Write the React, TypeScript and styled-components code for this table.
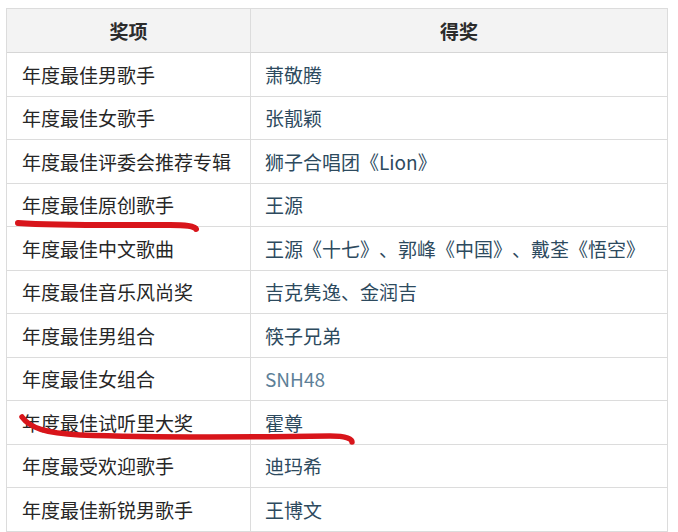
import styled, { createGlobalStyle } from "styled-components";

const GlobalStyle = createGlobalStyle`
  html, body {
    margin: 0;
    padding: 0;
    background: #ffffff;
  }
  body {
    font-family: "Noto Sans CJK SC", "Noto Sans", sans-serif;
    text-spacing-trim: space-all;
  }
`;

const Page = styled.div`
  position: relative;
  width: 678px;
  height: 532px;
  overflow: hidden;
  padding: 8px 0 0 6px;
  box-sizing: border-box;
`;

const Table = styled.div`
  width: 661px;
  display: grid;
  grid-template-columns: 244px 1fr;
  border-top: 1px solid #dcdcdc;
  border-left: 1px solid #dcdcdc;
`;

const HeadCell = styled.div`
  height: 44px;
  display: flex;
  align-items: center;
  justify-content: center;
  background: #f3f3f3;
  border-right: 1px solid #dcdcdc;
  border-bottom: 1px solid #d6d6d6;
  box-sizing: border-box;
  font-size: 19px;
  font-weight: 700;
  color: #2b2b2b;
`;

const Cell = styled.div<{ $link?: boolean; $faint?: boolean }>`
  height: 43.5px;
  display: flex;
  align-items: center;
  padding-left: ${(p) => (p.$link ? "14px" : "15px")};
  border-right: 1px solid #dcdcdc;
  border-bottom: 1px solid #dcdcdc;
  box-sizing: border-box;
  font-size: 19px;
  white-space: nowrap;
  text-spacing-trim: space-all;
  color: ${(p) => (p.$faint ? "#5d7f98" : p.$link ? "#2d4a5e" : "#262626")};
`;

const Marks = styled.svg`
  position: absolute;
  left: 0;
  top: 0;
  pointer-events: none;
`;

const rows: { award: string; winner: string; faint?: boolean }[] = [
  { award: "年度最佳男歌手", winner: "萧敬腾" },
  { award: "年度最佳女歌手", winner: "张靓颖" },
  { award: "年度最佳评委会推荐专辑", winner: "狮子合唱团《Lion》" },
  { award: "年度最佳原创歌手", winner: "王源" },
  { award: "年度最佳中文歌曲", winner: "王源《十七》、郭峰《中国》、戴荃《悟空》" },
  { award: "年度最佳音乐风尚奖", winner: "吉克隽逸、金润吉" },
  { award: "年度最佳男组合", winner: "筷子兄弟" },
  { award: "年度最佳女组合", winner: "SNH48", faint: true },
  { award: "年度最佳试听里大奖", winner: "霍尊" },
  { award: "年度最受欢迎歌手", winner: "迪玛希" },
  { award: "年度最佳新锐男歌手", winner: "王博文" },
];

export default function App() {
  return (
    <>
      <GlobalStyle />
      <Page>
        <Table>
          <HeadCell>奖项</HeadCell>
          <HeadCell>得奖</HeadCell>
          {rows.map((r) => [
            <Cell key={r.award}>{r.award}</Cell>,
            <Cell key={r.award + "-w"} $link $faint={r.faint}>
              {r.winner}
            </Cell>,
          ])}
        </Table>
        <Marks width="678" height="532" viewBox="0 0 678 532">
          <path
            d="M18 223 C 60 226, 120 225, 170 225 C 185 225, 195 226, 196 229"
            stroke="#d8151b"
            strokeWidth="6"
            fill="none"
            strokeLinecap="round"
          />
          <path
            d="M22 417 C 30 428, 45 433, 80 435 C 160 438, 260 437, 330 436 C 345 436, 352 438, 352 442"
            stroke="#d8151b"
            strokeWidth="5.5"
            fill="none"
            strokeLinecap="round"
          />
        </Marks>
      </Page>
    </>
  );
}
